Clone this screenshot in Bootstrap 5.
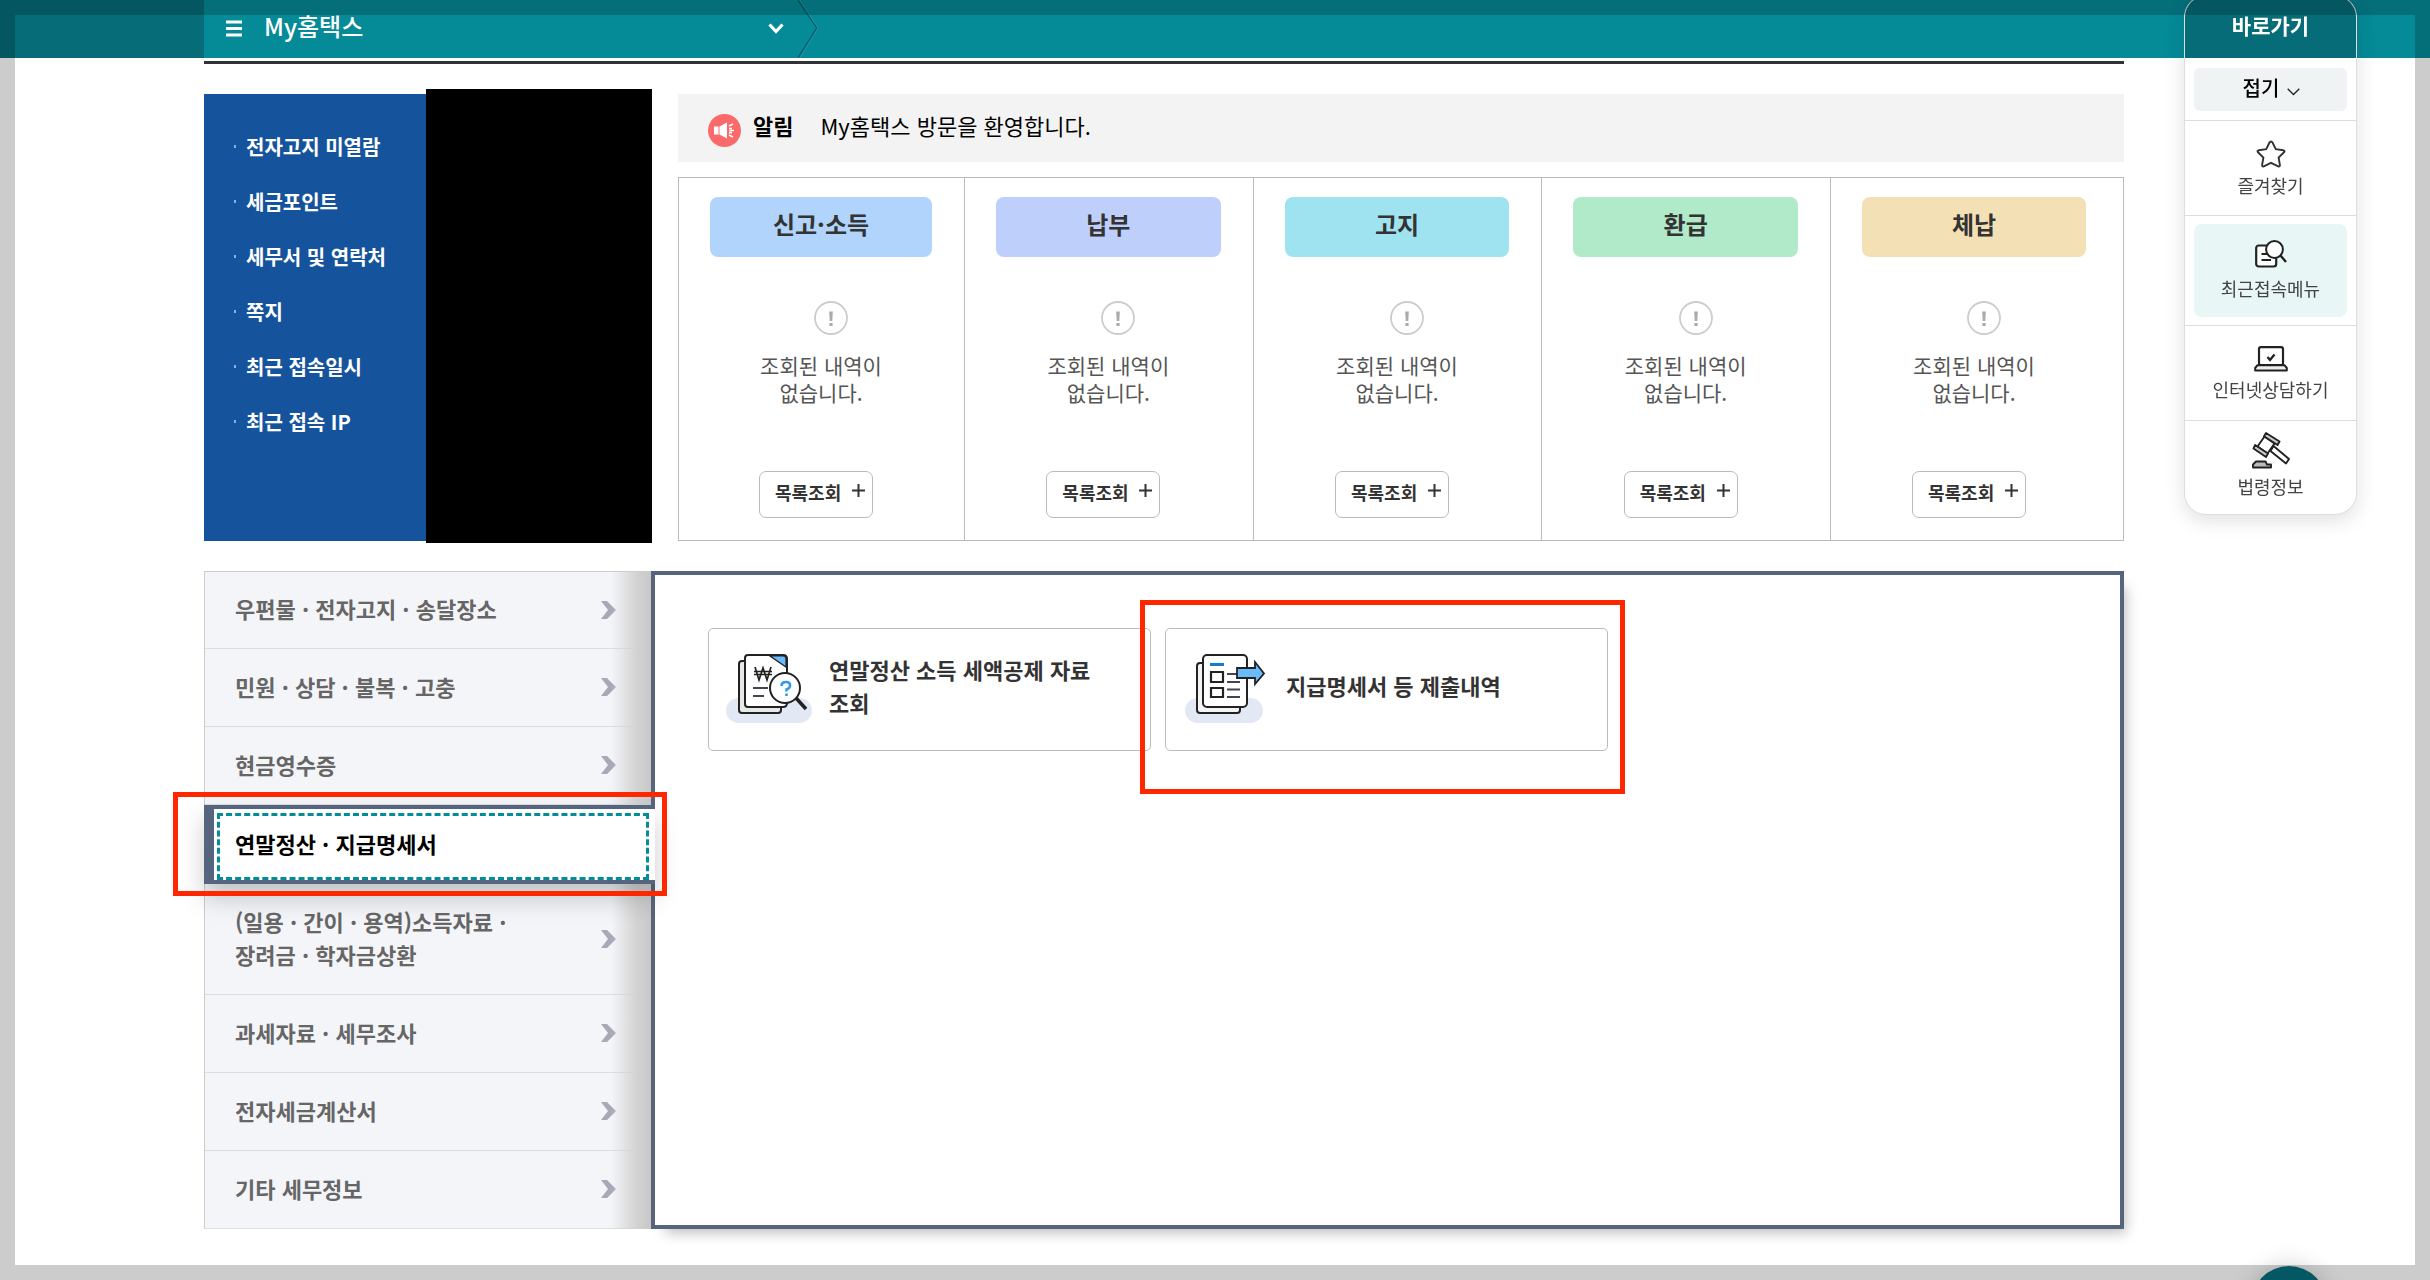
<!DOCTYPE html>
<html lang="ko">
<head>
<meta charset="utf-8">
<meta name="viewport" content="width=device-width, initial-scale=1">
<title>My홈택스</title>
<link href="https://cdn.jsdelivr.net/npm/bootstrap@5.3.0/dist/css/bootstrap.min.css" rel="stylesheet">
<style>
  :root { --teal: #058a98; --teal-dark: #066c78; --slate: #56657d; --line: #bbb; --red: #ff2600; }
  body { font-family: "Noto Sans CJK KR", "Noto Sans", sans-serif; font-size: 22px; line-height: 33px; color: #333; background: #fff; word-break: keep-all; }
  a { color: inherit; text-decoration: none; }
  svg { flex: none; display: block; }
  .page-frame { position: fixed; inset: 0; border: 15px solid rgba(0,0,0,.2); pointer-events: none; z-index: 50; }

  .topbar { height: 58px; background: var(--teal); color: #fff; }
  .topbar-edge { width: 204px; background: var(--teal-dark); }
  .topbar-menu { width: 594px; padding: 0 14px 2px 22px; background: none; border: 0; color: #fff; font-size: 24px; font-weight: 500; gap: 22px; }
  .topbar-menu span { padding-bottom: 5px; }
  .page-body { padding: 3px 306px 51px 204px; }
  .title-rule { height: 3px; background: #333; margin-bottom: 30px; }

  .summary { gap: 26px; min-height: 447px; margin-bottom: 30px; }
  .profile { width: 448px; background: linear-gradient(to right, #15549d 50%, #000 50%); padding: 25px 30px; }
  .profile li { font-size: 20px; height: 55px; line-height: 55px; color: #fff; font-weight: 700; gap: 10px; }
  .profile li::before { content: ""; width: 2px; height: 3px; background: #8db0d8; }
  .profile-cover { position: absolute; top: -5px; bottom: -2px; right: 0; width: 226px; background: #000; }

  .notice { height: 68px; background: #f3f3f3; color: #000; padding: 0 30px; margin-bottom: 15px; }
  .notice strong { margin: 0 27px 0 12px; }
  .notice > svg { margin-top: 4px; }
  .notice > :not(svg) { padding-bottom: 6px; }
  .status-grid { display: grid; grid-template-columns: 286px repeat(3, 1fr) 292px; border: 1px solid var(--line); }
  .status-col { padding: 19px 32px 22px 31px; border-right: 1px solid var(--line); }
  .status-col:last-child { border-right: 0; padding-right: 37px; }
  .status-pill { height: 60px; line-height: 54px; border-radius: 8px; font-size: 24px; font-weight: 700; text-align: center; }
  .status-icon { margin: 44px 0 17px 20px; }
  .status-text { font-size: 21px; line-height: 27px; color: #555; text-align: center; margin: 0; }
  .btn-list { width: 114px; height: 47px; padding: 0 7px 4px 15px; margin-right: 10px; border: 1px solid var(--line); border-radius: 7px; background: #fff; font-size: 18px; font-weight: 700; color: #333; white-space: nowrap; }
  .btn-list svg { margin-bottom: 5px; }

  .side-nav { width: 447px; background: #f4f5f9; border-left: 1px solid #ccc; border-top: 1px solid #ccc; position: relative; }
  .side-nav::after { content: ""; position: absolute; inset: 0 0 0 auto; width: 40px; background: linear-gradient(to right, rgba(204,204,204,0), #d2d2d2 65%, #c8c8c8); pointer-events: none; }
  .side-link { min-height: 78px; padding: 0 35px 1px 30px; border-bottom: 1px solid #ddd; color: #666; font-weight: 700; }
  .side-link:first-child { min-height: 77px; }
  .side-link.tall { min-height: 111px; }
  .side-link span { padding-bottom: 2px; }
  .side-link.current { position: relative; z-index: 3; min-height: 79px; margin: 0 -4px 0 -1px; padding: 0 6px 0 3px; border: solid var(--slate); border-width: 4px 0 4px 10px; background: #fff; color: #000; box-shadow: 0 14px 24px rgba(0,0,0,.2); }
  .focus-box { height: 67px; margin-top: 4px; padding: 0 0 7px 15px; border: 3px dashed #048c98; }
  .marker { position: absolute; border: 5px solid var(--red); pointer-events: none; z-index: 5; }
  .marker-nav { inset: -17px -12px -16px -41px; }
  .marker-tile { inset: -29px -18px -44px -26px; }

  .panel { border: 4px solid var(--slate); background: #fff; padding: 53px; gap: 14px; box-shadow: 8px 10px 12px -6px rgba(0,0,0,.25); position: relative; z-index: 1; }
  .tile { position: relative; width: 443px; min-height: 123px; padding: 0 16px 0 17px; border: 1px solid var(--line); border-radius: 5px; background: #fff; font-weight: 700; gap: 15px; }
  .tile span { padding-bottom: 8px; }

  .quick { position: fixed; top: -5px; right: 73px; width: 173px; z-index: 20; border: 1px solid #ddd; border-radius: 22px; overflow: hidden; background: #fff; box-shadow: 0 6px 20px rgba(0,0,0,.12); font-size: 18px; line-height: 26px; color: #444; text-align: center; }
  .quick-head { height: 62px; padding-top: 16px; background: var(--teal-dark); color: #fff; font-size: 21px; font-weight: 700; }
  .quick-fold { padding: 10px 9px 9px; border-bottom: 1px solid #ddd; }
  .quick-fold button { width: 100%; height: 43px; border: 0; border-radius: 6px; background: #eff3f4; color: #000; font-size: 20px; font-weight: 500; gap: 8px; padding: 0 0 4px 2px; }
  .quick-item { height: 95px; border-bottom: 1px solid #ddd; gap: 4px; padding-top: 2px; }
  .quick-item:last-child { height: 93px; border-bottom: 0; padding: 0 0 5px; }
  .quick-wrap { padding: 8px 9px; border-bottom: 1px solid #ddd; }
  .quick-wrap .quick-item { height: 93px; border: 0; border-radius: 8px; background: #e9f6f6; gap: 7px; padding: 0 0 1px; }
  .help-dot { position: fixed; right: 103px; bottom: -62px; width: 76px; height: 76px; border: 0; border-radius: 50%; background: #066e7c; box-shadow: 0 0 24px rgba(0,0,0,.2); z-index: 20; }
</style>
<script src="https://cdn.jsdelivr.net/npm/bootstrap@5.3.0/dist/js/bootstrap.bundle.min.js"></script>
</head>
<body>
<svg class="d-none" aria-hidden="true">
  <symbol id="arrow" viewBox="0 0 15 18"><path d="M0 0H6L15 9 6 18H0L7 9Z" fill="#a6a9b6"/></symbol>
  <symbol id="none" viewBox="0 0 34 34"><circle cx="17" cy="17" r="16" fill="#fff" stroke="#ccc" stroke-width="1.8"/><path d="M15.2 10.5h3.6l-.5 9.5h-2.6zM15.4 22h3.2v3h-3.2z" fill="#aaa"/></symbol>
  <symbol id="plus" viewBox="0 0 13 13"><path d="M6.500 0V13M0 6.500H13" stroke="#333" stroke-width="2"/></symbol>
</svg>

<header class="topbar d-flex">
  <div class="topbar-edge"></div>
  <button class="topbar-menu d-flex align-items-center" type="button">
    <svg width="16" height="17" viewBox="0 0 16 17"><path d="M0 2H16M0 8.500H16M0 15H16" stroke="#fff" stroke-width="3"/></svg>
    <span>My홈택스</span>
    <svg class="ms-auto" width="16" height="11" viewBox="0 0 16 11"><path d="M1.500 1.500 8 8.500 14.500 1.500" fill="none" stroke="#fff" stroke-width="3.200"/></svg>
  </button>
  <svg width="20" height="58" viewBox="0 0 20 58"><path d="M0 0 19 28 0 58" fill="none" stroke="#04606c" stroke-width="1.600"/><path d="M1.500 0 20 28 1.500 58" fill="none" stroke="#3aa6b1" stroke-width=".6"/></svg>
</header>

<main class="page-body">
  <div class="title-rule"></div>

  <section class="summary d-flex">
    <div class="profile flex-shrink-0 position-relative">
      <ul class="list-unstyled m-0">
        <li class="d-flex align-items-center">전자고지 미열람</li>
        <li class="d-flex align-items-center">세금포인트</li>
        <li class="d-flex align-items-center">세무서 및 연락처</li>
        <li class="d-flex align-items-center">쪽지</li>
        <li class="d-flex align-items-center">최근 접속일시</li>
        <li class="d-flex align-items-center">최근 접속 IP</li>
      </ul>
      <div class="profile-cover"></div>
    </div>

    <div class="flex-grow-1 d-flex flex-column">
      <div class="notice d-flex align-items-center">
        <svg width="33" height="33" viewBox="0 0 33 33"><circle cx="16.500" cy="16.500" r="16.500" fill="#fb6a6a"/><path d="M6 12.500H10.500V20.500H6ZM11.500 12.500 19 8.500V24.500L11.500 20.500Z" fill="#fff"/><path d="M21 12 25 10M21.500 16.500H26M21 21 25 23M21 14.500h3M21 18.700h3" stroke="#fff" stroke-width="1.700"/></svg>
        <strong>알림</strong><span>My홈택스 방문을 환영합니다.</span>
      </div>
      <div class="status-grid flex-grow-1">
        <div class="status-col d-flex flex-column"><div class="status-pill" style="background:#b0d4fb">신고·소득</div><svg class="status-icon align-self-center" width="34" height="34"><use href="#none"/></svg><p class="status-text">조회된 내역이<br>없습니다.</p><button class="btn-list d-flex align-items-center justify-content-between align-self-center mt-auto" type="button">목록조회<svg width="13" height="13"><use href="#plus"/></svg></button></div>
        <div class="status-col d-flex flex-column"><div class="status-pill" style="background:#bfcffb">납부</div><svg class="status-icon align-self-center" width="34" height="34"><use href="#none"/></svg><p class="status-text">조회된 내역이<br>없습니다.</p><button class="btn-list d-flex align-items-center justify-content-between align-self-center mt-auto" type="button">목록조회<svg width="13" height="13"><use href="#plus"/></svg></button></div>
        <div class="status-col d-flex flex-column"><div class="status-pill" style="background:#9fe3f0">고지</div><svg class="status-icon align-self-center" width="34" height="34"><use href="#none"/></svg><p class="status-text">조회된 내역이<br>없습니다.</p><button class="btn-list d-flex align-items-center justify-content-between align-self-center mt-auto" type="button">목록조회<svg width="13" height="13"><use href="#plus"/></svg></button></div>
        <div class="status-col d-flex flex-column"><div class="status-pill" style="background:#b1eac9">환급</div><svg class="status-icon align-self-center" width="34" height="34"><use href="#none"/></svg><p class="status-text">조회된 내역이<br>없습니다.</p><button class="btn-list d-flex align-items-center justify-content-between align-self-center mt-auto" type="button">목록조회<svg width="13" height="13"><use href="#plus"/></svg></button></div>
        <div class="status-col d-flex flex-column"><div class="status-pill" style="background:#f3e1b5">체납</div><svg class="status-icon align-self-center" width="34" height="34"><use href="#none"/></svg><p class="status-text">조회된 내역이<br>없습니다.</p><button class="btn-list d-flex align-items-center justify-content-between align-self-center mt-auto" type="button">목록조회<svg width="13" height="13"><use href="#plus"/></svg></button></div>
      </div>
    </div>
  </section>

  <section class="d-flex">
    <nav class="side-nav flex-shrink-0">
      <a class="side-link d-flex align-items-center justify-content-between" href="#"><span>우편물 · 전자고지 · 송달장소</span><svg width="15" height="18"><use href="#arrow"/></svg></a>
      <a class="side-link d-flex align-items-center justify-content-between" href="#"><span>민원 · 상담 · 불복 · 고충</span><svg width="15" height="18"><use href="#arrow"/></svg></a>
      <a class="side-link d-flex align-items-center justify-content-between" href="#"><span>현금영수증</span><svg width="15" height="18"><use href="#arrow"/></svg></a>
      <a class="side-link current d-block" href="#" aria-current="page"><div class="focus-box d-flex align-items-center">연말정산 · 지급명세서</div><i class="marker marker-nav"></i></a>
      <a class="side-link tall d-flex align-items-center justify-content-between" href="#"><span>(일용 · 간이 · 용역)소득자료 ·<br>장려금 · 학자금상환</span><svg width="15" height="18"><use href="#arrow"/></svg></a>
      <a class="side-link d-flex align-items-center justify-content-between" href="#"><span>과세자료 · 세무조사</span><svg width="15" height="18"><use href="#arrow"/></svg></a>
      <a class="side-link d-flex align-items-center justify-content-between" href="#"><span>전자세금계산서</span><svg width="15" height="18"><use href="#arrow"/></svg></a>
      <a class="side-link d-flex align-items-center justify-content-between" href="#"><span>기타 세무정보</span><svg width="15" height="18"><use href="#arrow"/></svg></a>
    </nav>

    <div class="panel flex-grow-1 d-flex align-items-start">
      <a class="tile d-flex align-items-center" href="#">
        <svg width="88" height="72" viewBox="0 0 88 72">
          <rect x="0" y="44" width="86" height="25" rx="12.500" fill="#e3e8f5"/>
          <rect x="13" y="7" width="42" height="52" rx="3" fill="#e8e8e8" stroke="#222" stroke-width="2"/>
          <path d="M22 1H57Q61 1 61 5V49Q61 53 57 53H22Q19 53 19 50V4Q19 1 22 1Z" fill="#fff" stroke="#222" stroke-width="2"/>
          <path d="M44 2H57Q60 2 60 5V13Z" fill="#69bbfb" stroke="#222" stroke-width="1.200"/>
          <path d="M29 13 33 26 37 14 41 26 45 13M28 17.500H46M28 20.500H46" fill="none" stroke="#222" stroke-width="1.700"/>
          <path d="M27 34H42M27 42H38" stroke="#445" stroke-width="2"/>
          <path d="M70 44 80 55" stroke="#222" stroke-width="3.500"/>
          <circle cx="59" cy="34" r="15" fill="#fff" stroke="#222" stroke-width="2"/>
          <path d="M55.500 32Q55.500 28 60 28T64 32Q64 34 60.500 35.500V37.500M60.500 39.500V42" fill="none" stroke="#3498ec" stroke-width="2.600"/>
        </svg>
        <span>연말정산 소득 세액공제 자료 조회</span>
      </a>
      <a class="tile d-flex align-items-center" href="#">
        <svg width="88" height="72" viewBox="0 0 88 72">
          <rect x="2" y="44" width="78" height="25" rx="12.500" fill="#e3e8f5"/>
          <rect x="14" y="9" width="43" height="50" rx="3" fill="#f4f4f4" stroke="#222" stroke-width="2"/>
          <rect x="20" y="1" width="44" height="52" rx="4" fill="#fff" stroke="#222" stroke-width="2"/>
          <path d="M27 10.500H41" stroke="#1c78c8" stroke-width="3"/>
          <path d="M28 18H40V28H28ZM28 34H40V43H28Z" fill="#fff" stroke="#222" stroke-width="2.200"/>
          <path d="M44 20H57M44 28H57M44 35.500H57M44 43H57" stroke="#445" stroke-width="1.800"/>
          <path d="M54 14H72V8L81 19.500 72 30V24H54Z" fill="#69bbfb" stroke="#222" stroke-width="1.800"/>
        </svg>
        <span>지급명세서 등 제출내역</span>
        <i class="marker marker-tile"></i>
      </a>
    </div>
  </section>
</main>

<aside class="quick">
  <div class="quick-head">바로가기</div>
  <div class="quick-fold"><button class="d-flex align-items-center justify-content-center" type="button">접기<svg class="mt-2" width="13" height="8" viewBox="0 0 13 8"><path d="M.7.700 6.500 6.500 12.300.7" fill="none" stroke="#222" stroke-width="1.300"/></svg></button></div>
  <a class="quick-item d-flex flex-column align-items-center justify-content-center" href="#">
    <svg width="30" height="28" viewBox="0 0 30 28"><path d="M15 1.500Q16 1.500 16.500 2.500L19.800 9.200 27.400 10.300Q29.300 10.800 28 12.300L22.600 17.500 23.900 25Q24 27 22.200 26.400L15 22.800 7.800 26.400Q6 27 6.100 25L7.400 17.500 2 12.300Q.7 10.800 2.600 10.300L10.200 9.200 13.500 2.500Q14 1.500 15 1.500Z" fill="#fff" stroke="#333" stroke-width="1.900"/></svg>
    <span>즐겨찾기</span></a>
  <div class="quick-wrap"><a class="quick-item d-flex flex-column align-items-center justify-content-center" href="#">
    <svg width="32" height="28" viewBox="0 0 32 28"><rect x="1.200" y="5.500" width="20" height="21" rx="2.500" fill="#fff" stroke="#222" stroke-width="2.200"/><path d="M6.500 14H13M6.500 20H16" stroke="#222" stroke-width="2.200"/><circle cx="19.500" cy="9.500" r="8.400" fill="#fff" stroke="#222" stroke-width="2"/><path d="M25.500 15.500 31 22" stroke="#222" stroke-width="2.400"/></svg>
    <span>최근접속메뉴</span></a></div>
  <a class="quick-item d-flex flex-column align-items-center justify-content-center" href="#">
    <svg width="34" height="26" viewBox="0 0 34 26"><rect x="5" y="1.200" width="24" height="18" rx="2" fill="#fff" stroke="#222" stroke-width="2.200"/><path d="M3.500 19.200H30.500L32.800 22V24.500H1.200V22Z" fill="#eee" stroke="#222" stroke-width="2" stroke-linejoin="round"/><path d="M13.500 11 16 14 20.500 8.500" fill="none" stroke="#222" stroke-width="2.300"/></svg>
    <span>인터넷상담하기</span></a>
  <a class="quick-item d-flex flex-column align-items-center justify-content-center" href="#">
    <svg width="38" height="37" viewBox="0 0 38 37" stroke="#222" stroke-width="1.900" stroke-linejoin="round"><path d="M12.500 4.500 22.500 11.500 15.500 21.500 5.500 14.500Z" fill="#fff"/><path d="M14 1 27.500 9.500 25.500 13 12 4.200ZM3 13 16 21.500 14 25 1.500 16.500Z" fill="#ccc"/><path d="M21.500 14 37 27 34 31.500 18.500 19Z" fill="#fff"/><path d="M1 35.500V32.500L4 29.500H13.500L15 32.500H19V35.500Z" fill="#bbb"/></svg>
    <span>법령정보</span></a>
</aside>

<button class="help-dot" type="button" aria-label="상담 도우미"></button>
<div class="page-frame"></div>
</body>
</html>
